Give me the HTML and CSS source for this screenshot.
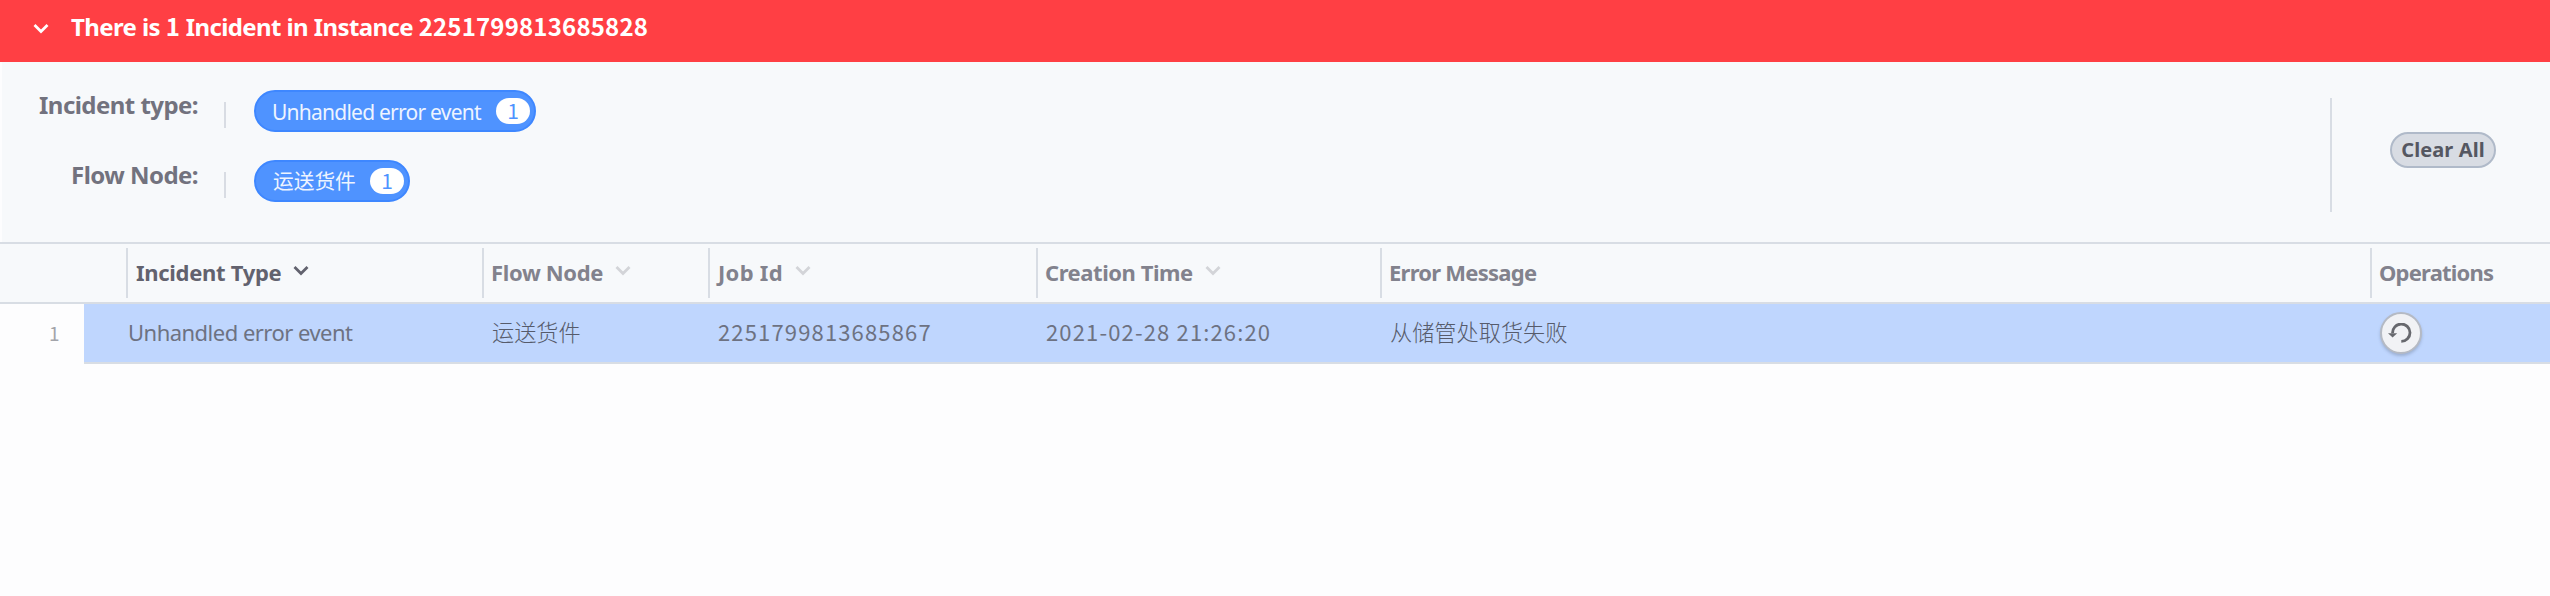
FILE: index.html
```html
<!DOCTYPE html>
<html lang="en">
<head>
<meta charset="utf-8">
<title>Incidents</title>
<link rel="stylesheet" href="styles.css">
</head>
<body>
<header class="banner">
  <svg class="banner-arrow" viewBox="0 0 16 11"><path d="M1.5 2 8 8.5 14.5 2"/></svg>
  <span class="banner-title">There is <span class="digits">1</span> Incident in Instance <span class="digits">2251799813685828</span></span>
</header>
<section class="filters">
  <div class="filter-list">
    <div class="filter">
      <span class="filter-label">Incident type:</span>
      <span class="filter-rule"></span>
      <button class="pill"><span class="pill-text">Unhandled error event</span><span class="count">1</span></button>
    </div>
    <div class="filter">
      <span class="filter-label">Flow Node:</span>
      <span class="filter-rule"></span>
      <button class="pill"><span class="pill-text cjk">运送货件</span><span class="count">1</span></button>
    </div>
  </div>
  <div class="filter-actions"><button class="clear">Clear All</button></div>
</section>
<main class="table">
  <div class="row head">
    <div class="th blank"></div>
    <div class="th sorted"><span class="h-type">Incident Type</span><svg class="sort" viewBox="0 0 16 11"><path d="M1.5 2 8 8.5 14.5 2"/></svg></div>
    <div class="th"><span class="h-flow">Flow Node</span><svg class="sort" viewBox="0 0 16 11"><path d="M1.5 2 8 8.5 14.5 2"/></svg></div>
    <div class="th"><span class="h-job">Job Id</span><svg class="sort" viewBox="0 0 16 11"><path d="M1.5 2 8 8.5 14.5 2"/></svg></div>
    <div class="th"><span class="h-time">Creation Time</span><svg class="sort" viewBox="0 0 16 11"><path d="M1.5 2 8 8.5 14.5 2"/></svg></div>
    <div class="th"><span class="h-error">Error Message</span></div>
    <div class="th"><span class="h-ops">Operations</span></div>
  </div>
  <div class="row body">
    <div class="td index">1</div>
    <div class="td gutter"></div>
    <div class="td name">Unhandled error event</div>
    <div class="td cjk">运送货件</div>
    <div class="td num">2251799813685867</div>
    <div class="td num">2021-02-28 21:26:20</div>
    <div class="td cjk">从储管处取货失败</div>
    <div class="td ops"><button class="retry" aria-label="Retry"><svg viewBox="0 0 24 20"><path class="arc" d="M4.6 10.2A8.7 8.7 0 1 1 13.3 18.4"/><path class="tip" d="M0 10.2H9.2L4.6 14.6Z"/></svg></button></div>
  </div>
</main>
</body>
</html>
```
FILE: styles.css
```css
* { box-sizing: border-box; }
body {
  margin: 0;
  background: #fdfdfe;
  color: #62626e;
  font: 22px "Noto Sans", "Noto Sans CJK SC", sans-serif;
}
button { font: inherit; margin: 0; }
svg { display: block; flex: none; }
.banner {
  display: flex;
  align-items: center;
  height: 62px;
  padding: 0 0 9px 33px;
  gap: 22px;
  background: #ff3f44;
  color: #fff;
}
.banner-arrow, .sort {
  width: 16px;
  height: 11px;
  fill: none;
  stroke: currentColor;
  stroke-width: 2.8;
}
.banner-arrow { margin-top: 3px; }
.banner-title { font-size: 24px; font-weight: 700; line-height: 32px; letter-spacing: -.6px; }
.digits { font-family: "Noto Sans CJK SC", sans-serif; line-height: 1; letter-spacing: .18px; }
.filters {
  display: flex;
  justify-content: space-between;
  height: 180px;
  margin-left: 2px;
  background: #f7f9fb;
}
.filter-list {
  display: flex;
  flex-direction: column;
  gap: 28px;
  padding-top: 28px;
}
.filter { display: flex; height: 42px; }
.filter-label {
  width: 196px;
  padding-top: 1px;
  font-size: 24px;
  font-weight: 700;
  line-height: 28px;
  letter-spacing: -.55px;
  text-align: right;
  color: #72727e;
}
.filter-rule {
  width: 2px;
  height: 26px;
  margin: 12px 28px 0 26px;
  background: #d8dce3;
}
.pill {
  display: flex;
  align-items: center;
  gap: 14px;
  height: 42px;
  padding: 0 4px 0 16px;
  border: 2px solid #3e87ff;
  border-radius: 21px;
  background: #4f93ff;
  color: #fff;
  font-size: 21px;
  line-height: 30px;
}
.pill-text { width: 210px; letter-spacing: -.76px; text-align: left; white-space: nowrap; opacity: .9; padding-top: 2px; }
.pill-text.cjk { width: 84px; padding-left: 1px; font-size: 20.7px; letter-spacing: 0; padding-top: 0; }
.count {
  width: 34px;
  height: 26px;
  border-radius: 13px;
  background: #fff;
  color: #4f93ff;
  font: 21px/24px "Noto Sans CJK SC", sans-serif;
  text-align: center;
}
.filter-actions {
  display: flex;
  align-items: center;
  width: 220px;
  height: 114px;
  margin-top: 36px;
  padding-left: 58px;
  border-left: 2px solid #d8dde4;
}
.clear {
  width: 106px;
  height: 36px;
  margin-bottom: 10px;
  padding: 0;
  border: 2px solid #b0bac9;
  border-radius: 18px;
  background: #d8dce3;
  color: #555761;
  font-size: 20px;
  font-weight: 700;
  line-height: 32px;
  letter-spacing: .1px;
}
.row {
  display: grid;
  grid-template-columns: 84px 42px 356px 226px 328px 344px 990px 180px;
}
.head {
  height: 62px;
  padding: 4px 0;
  border-top: 2px solid #d8dde4;
  border-bottom: 2px solid #d8dde4;
  background: #f7f9fb;
}
.th {
  display: flex;
  align-items: center;
  height: 50px;
  padding: 0 0 3px 8px;
  border-left: 2px solid #d8dde4;
  color: #82828d;
  font-weight: 700;
  white-space: nowrap;
}
.th.blank { grid-column: span 2; border: 0; }
.th.sorted { color: #62626e; }
.sort { margin-left: 12px; margin-bottom: 3px; color: #d3d4d8; }
.sorted .sort { color: #62626e; }
.h-type { letter-spacing: -.3px; }
.h-flow { margin-left: -1px; letter-spacing: -.35px; }
.h-job { letter-spacing: .3px; }
.h-time { margin-left: -1px; letter-spacing: -.45px; }
.h-error { margin-left: -1px; letter-spacing: -.75px; }
.h-ops { margin-left: -1px; letter-spacing: -.8px; }
.body { height: 60px; }
.td {
  display: flex;
  align-items: center;
  padding: 0 0 3px 10px;
  border-bottom: 2px solid #d8dde4;
  background: #bfd6fe;
  color: #6d7282;
  white-space: nowrap;
}
.td.index {
  padding: 0 0 4px 49px;
  border-bottom: 0;
  background: #fdfdfe;
  color: #a3a4aa;
  font: 19px "Noto Sans CJK SC", sans-serif;
}
.td.name { padding-left: 2px; letter-spacing: -.52px; }
.td.num {
  padding-bottom: 5px;
  font-family: "Noto Sans CJK SC", sans-serif;
  letter-spacing: 1.15px;
}
.body .cjk { padding-bottom: 5px; font-weight: 300; font-size: 22.2px; font-family: "Noto Sans CJK SC", sans-serif; color: #565b6b; }
.td.ops { padding: 0 0 0 10px; }
.retry {
  display: flex;
  align-items: center;
  justify-content: center;
  width: 42px;
  height: 42px;
  padding: 0;
  border: 2px solid #b5bac4;
  border-radius: 21px;
  background: #f1f2f5;
  box-shadow: 0 2px 3px rgba(60, 70, 90, .25);
}
.retry svg { width: 24px; height: 20px; margin-left: -2px; }
.arc { fill: none; stroke: #67686e; stroke-width: 2.8; }
.tip { fill: #67686e; }
```
